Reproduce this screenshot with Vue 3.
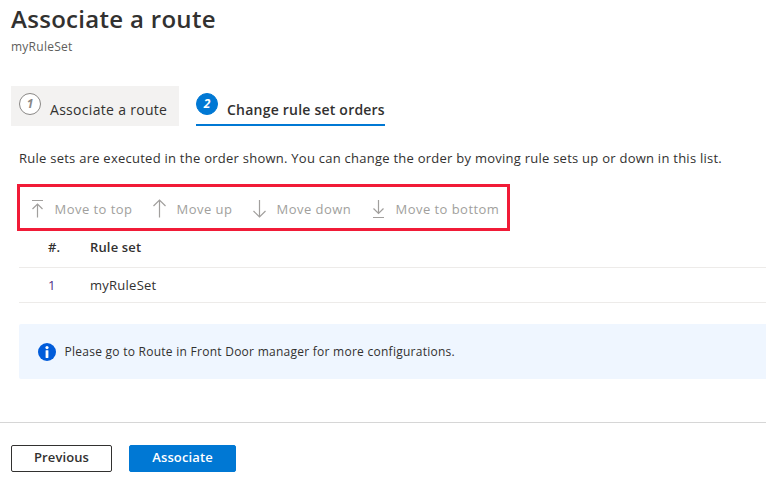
<script setup>
const actions = [
  { id: 'top', label: 'Move to top', path: 'M1 1.5H12M6.5 18.5V5M1.5 10L6.5 5L11.5 10' },
  { id: 'up', label: 'Move up', path: 'M6.5 18.5V1M.5 7L6.5 1L12.5 7' },
  { id: 'down', label: 'Move down', path: 'M6.5 1V18M.5 12L6.5 18L12.5 12' },
  { id: 'bottom', label: 'Move to bottom', path: 'M6.5 1V14.5M1.5 9.5L6.5 14.5L11.5 9.5M1 18.5H12' },
]
const rows = [{ order: 1, name: 'myRuleSet' }]
</script>

<template>
  <main class="page">
    <header class="heading">
      <h1>Associate a route</h1>
      <p>myRuleSet</p>
    </header>
    <nav class="steps">
      <a class="step first"><span class="badge">1</span><span class="step-name">Associate a route</span></a>
      <a class="step active"><span class="badge">2</span><span class="step-name">Change rule set orders</span></a>
    </nav>
    <section class="content">
      <p class="intro">Rule sets are executed in the order shown. You can change the order by moving rule sets up or down in this list.</p>
      <div class="toolbar">
        <button v-for="a in actions" :key="a.id" :class="['action', a.id]">
          <svg width="13" height="20" viewBox="0 0 13 20"><path :d="a.path" /></svg>
          <span>{{ a.label }}</span>
        </button>
      </div>
      <div class="row head"><span>#.</span><span class="name">Rule set</span></div>
      <div v-for="r in rows" :key="r.order" class="row"><span class="order">{{ r.order }}</span><span class="name">{{ r.name }}</span></div>
      <div class="info">
        <svg width="18" height="18" viewBox="0 0 18 18">
          <circle cx="9" cy="9" r="9" fill="#015cda" />
          <circle cx="9" cy="4.6" r="1.6" fill="#fff" />
          <rect x="7.6" y="7.2" width="2.8" height="7.8" rx=".4" fill="#fff" />
        </svg>
        <span>Please go to Route in Front Door manager for more configurations.</span>
      </div>
    </section>
    <footer class="footer">
      <button class="btn">Previous</button>
      <button class="btn primary">Associate</button>
    </footer>
  </main>
</template>

<style>
body { margin: 0; background: #fff; overflow: hidden; }
</style>

<style scoped>
* { box-sizing: border-box; }
.page {
  width: 766px;
  height: 483px;
  overflow: hidden;
  font-family: "Open Sans", "Noto Sans", sans-serif;
  font-size: 13px;
  letter-spacing: .25px;
  color: #323130;
  white-space: nowrap;
}
h1, p { margin: 0; }
button { font: inherit; letter-spacing: inherit; padding: 0; background: none; border: 0; }
.heading { height: 86px; padding: 2px 0 0 11px; }
h1 { font-size: 24px; line-height: 33px; font-weight: 600; letter-spacing: .3px; }
.heading p { font-size: 12px; line-height: 23px; color: #605e5c; }
.steps { display: flex; gap: 17px; height: 40px; padding-left: 11px; }
.step { display: flex; height: 40px; font-size: 14px; letter-spacing: .3px; }
.first { width: 168px; padding-left: 8px; background: #f3f2f1; }
.active { width: 189px; border-bottom: 2px solid #0078d4; font-weight: 600; letter-spacing: .22px; }
.badge {
  flex: none;
  width: 22px;
  height: 22px;
  margin-top: 7px;
  border: 1px solid #8a8886;
  border-radius: 50%;
  background: #fff;
  color: #8a8886;
  font-size: 12px;
  font-weight: 700;
  font-style: italic;
  letter-spacing: 0;
  line-height: 19px;
  text-align: center;
}
.active .badge { border-color: #0078d4; background: #0078d4; color: #fff; }
.step-name { margin-left: 9px; line-height: 47px; }
.content { padding-left: 19px; }
.intro { height: 58px; padding-top: 22px; line-height: 20px; }
.toolbar {
  display: flex;
  width: 493px;
  height: 47px;
  margin-left: -2px;
  padding: 2px 0 0 10.5px;
  border: 3px solid #f11b37;
}
.action { display: flex; align-items: center; color: #a19f9d; letter-spacing: .46px; }
.action svg { margin-right: 11px; fill: none; stroke: #a19f9d; stroke-width: 1.2; }
.top { width: 122px; }
.up { width: 100px; }
.down { width: 119px; }
.row { display: flex; height: 35px; padding-left: 29px; border-bottom: 1px solid #edebe9; line-height: 34px; }
.row > :first-child { width: 42px; }
.head { height: 37px; line-height: 32px; font-weight: 600; letter-spacing: .15px; }
.order { color: #4f2d87; }
.info {
  display: flex;
  align-items: center;
  gap: 8.5px;
  height: 55px;
  margin-top: 21px;
  padding-left: 19px;
  border-radius: 2px 0 0 2px;
  background: #eff6ff;
  font-size: 12px;
  letter-spacing: .26px;
}
.footer { display: flex; gap: 17px; margin-top: 43px; padding: 22px 0 0 11px; border-top: 1px solid #d6d6d6; }
.btn { width: 101px; height: 27px; padding-bottom: 2px; border: 1px solid #323130; border-radius: 2px; font-weight: 600; letter-spacing: .12px; line-height: 23px; color: #323130; }
.primary { width: 107px; border-color: #0078d4; background: #0078d4; color: #fff; }
</style>
